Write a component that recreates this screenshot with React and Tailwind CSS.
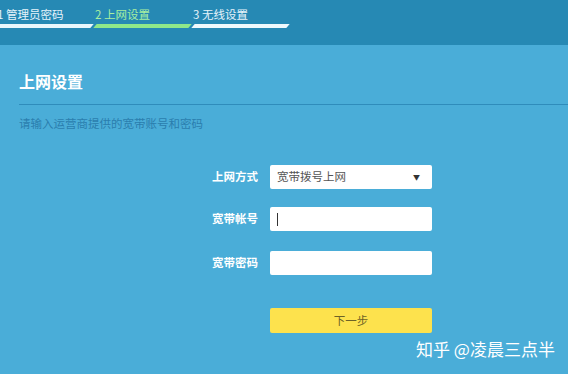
import React from "react";

const steps = [
    { label: "1 管理员密码", text: "text-[#e6f4fb]", bar: "bg-[#e9f7fc]" },
    { label: "2 上网设置", text: "text-[#a8f0a0]", bar: "bg-[#8fe88a]" },
    { label: "3 无线设置", text: "text-[#e6f4fb]", bar: "bg-[#eef9fd]" },
];

const Field = ({ label, children }) => (
    <div className="flex items-center">
        <div className="w-[270px] pr-[12px] text-right text-[11.5px] font-bold text-white">{label}</div>
        <div className="w-[162px] h-[24px] bg-white rounded-[2px] flex items-center pl-[7px] pr-[12px] text-[11.5px] text-[#555]">
            {children}
        </div>
    </div>
);

export default function App() {
    return (
        <div
            className="w-[568px] h-[374px] bg-[#4aadd8] overflow-hidden relative"
            style={{ fontFamily: '"Noto Sans CJK SC", "Liberation Sans", sans-serif' }}
        >
            <div className="h-[45px] bg-[#2689b4] flex items-start pt-[6px] ml-[-3px]">
                {steps.map((s, i) => (
                    <div key={i} className="w-[98px] flex flex-col">
                        <div className={`text-[11.5px] leading-[16px] ${s.text}`}>{s.label}</div>
                        <div className={`mt-[2px] h-[4px] mr-[3px] -skew-x-[40deg] ${s.bar}`}></div>
                    </div>
                ))}
            </div>

            <div className="pl-[19px] pt-[25px]">
                <div className="text-[16px] font-bold text-white leading-[22px]">上网设置</div>
                <div className="mt-[12px] h-px bg-[#2f8cbb]"></div>
                <div className="mt-[11px] text-[11.5px] text-[#2a7eae] leading-[15px]">请输入运营商提供的宽带账号和密码</div>
            </div>

            <div className="mt-[34px] flex flex-col gap-[18px]">
                <Field label="上网方式">
                    <span className="flex-1">宽带拨号上网</span>
                    <span className="text-[7px] text-[#333]">▼</span>
                </Field>
                <Field label="宽带帐号">
                    <span className="w-px h-[13px] bg-[#333]"></span>
                </Field>
                <div className="mt-[2px]">
                    <Field label="宽带密码"></Field>
                </div>
            </div>

            <div className="mt-[33px] ml-[270px] w-[162px] h-[25px] bg-[#fde24d] rounded-[2px] flex items-center justify-center text-[11.5px] text-[#6d6226]">
                下一步
            </div>

            <div className="absolute left-[416px] top-[338px] text-[17px] text-white leading-[22px]">知乎 @凌晨三点半</div>
        </div>
    );
}
